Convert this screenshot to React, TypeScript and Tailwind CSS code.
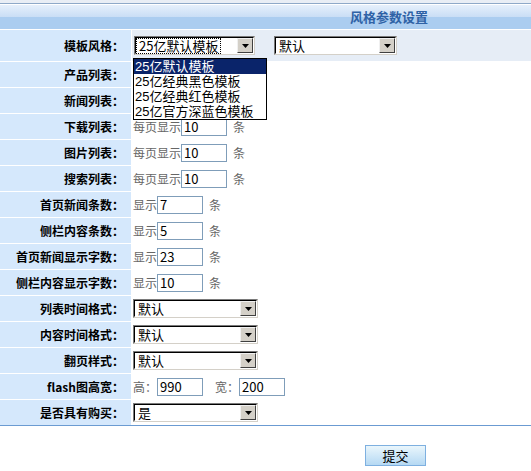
import React from "react"

const font = { fontFamily: '"Noto Sans CJK SC", "Liberation Sans", sans-serif' }

function Select({ value, width, focus }: { value: string; width: string; focus?: boolean }) {
  return (
    <div
      className={`flex h-[19px] ${width} border border-t-[#7a7a7a] border-l-[#7a7a7a] border-r-[#d4d0c8] border-b-[#d4d0c8] bg-white`}
    >
      <div className="flex flex-1 border border-t-black border-l-black border-r-white border-b-white min-w-0">
        <div className="flex-1 min-w-0 flex items-center px-px">
          <span
            className={`text-[13px] leading-[14px] text-black px-[2px] ${focus ? "outline-1 outline-dotted outline-black" : ""}`}
          >
            {value}
          </span>
        </div>
        <div className="w-[16px] flex items-center justify-center bg-[#d4d0c8] border border-t-[#f0f0f0] border-l-[#f0f0f0] border-r-[#404040] border-b-[#404040]">
          <svg width="7" height="4" viewBox="0 0 7 4">
            <path d="M0 0h7L3.5 4z" fill="#000" />
          </svg>
        </div>
      </div>
    </div>
  )
}

function Input({ value }: { value: string }) {
  return (
    <div className="flex items-center h-[18px] w-[46px] border border-[#7f9db9] bg-white px-[2px] text-[13px] text-black">
      {value}
    </div>
  )
}

function Row({ label, children, first }: { label: string; children?: React.ReactNode; first?: boolean }) {
  return (
    <div className={`flex border-t border-white ${first ? "h-[32px] bg-[#e6edf6]" : "h-[26px] bg-white"}`}>
      <div className="w-[132px] shrink-0 bg-[#d5e8fc] border-r border-white flex items-center justify-end pr-[7px] text-[12px] font-bold text-black">
        {label}：
      </div>
      <div className="flex-1 flex items-center gap-[6px] pl-[1px] text-[12px] text-[#666]">{children}</div>
    </div>
  )
}

const Count = ({ pre, value }: { pre: string; value: string }) => (
  <>
    <span className="flex items-center">
      <span>{pre}</span>
      <Input value={value} />
    </span>
    <span>条</span>
  </>
)

export default function App() {
  const options = ["25亿默认模板", "25亿经典黑色模板", "25亿经典红色模板", "25亿官方深蓝色模板"]
  return (
    <div className="w-[531px] h-[471px] bg-white" style={font}>
      {/* Header */}
      <div className="h-[3px] bg-[#e9eef5]" />
      <div className="h-px bg-[#8fa9c8]" />
      <div className="h-px bg-white" />
      <div className="relative h-[24px]">
        <div className="h-[12px] bg-gradient-to-b from-[#e6f0fb] to-[#c9def5]" />
        <div className="h-[12px] bg-[#abcdf0]" />
        <div className="absolute inset-0 flex items-center pl-[350px] text-[13px] font-bold text-[#2f62a6]">
          风格参数设置
        </div>
      </div>

      {/* Rows */}
      <Row label="模板风格" first>
        <div className="relative ml-[1px]">
          <Select value="25亿默认模板" width="w-[121px]" focus />
          <div className="absolute left-[-1px] top-[22px] z-10 w-[134px] border border-black bg-white font-['Liberation_Sans','Noto_Sans_CJK_SC',sans-serif]">
            {options.map((o, i) => (
              <div
                key={o}
                className={`h-[15px] flex items-center text-[13px] leading-[15px] pl-px ${i === 0 ? "bg-[#0a246a] text-white" : "text-black"}`}
              >
                {o}
              </div>
            ))}
          </div>
        </div>
        <div className="ml-[13px]">
          <Select value="默认" width="w-[123px]" />
        </div>
      </Row>
      <Row label="产品列表" />
      <Row label="新闻列表" />
      <Row label="下载列表">
        <Count pre="每页显示" value="10" />
      </Row>
      <Row label="图片列表">
        <Count pre="每页显示" value="10" />
      </Row>
      <Row label="搜索列表">
        <Count pre="每页显示" value="10" />
      </Row>
      <Row label="首页新闻条数">
        <Count pre="显示" value="7" />
      </Row>
      <Row label="侧栏内容条数">
        <Count pre="显示" value="5" />
      </Row>
      <Row label="首页新闻显示字数">
        <Count pre="显示" value="23" />
      </Row>
      <Row label="侧栏内容显示字数">
        <Count pre="显示" value="10" />
      </Row>
      <Row label="列表时间格式">
        <Select value="默认" width="w-[125px]" />
      </Row>
      <Row label="内容时间格式">
        <Select value="默认" width="w-[125px]" />
      </Row>
      <Row label="翻页样式">
        <Select value="默认" width="w-[125px]" />
      </Row>
      <Row label="flash图高宽">
        <span className="flex items-center">
          <span>高：</span>
          <Input value="990" />
        </span>
        <span className="flex items-center ml-[6px]">
          <span>宽：</span>
          <Input value="200" />
        </span>
      </Row>
      <Row label="是否具有购买">
        <Select value="是" width="w-[125px]" />
      </Row>
      <div className="h-px bg-[#6b9bd2]" />

      {/* Submit */}
      <div className="pt-[16px] pl-[365px]">
        <button className="w-[61px] h-[21px] border border-[#7eb0e0] bg-gradient-to-b from-[#eaf6fc] to-[#b5d9f3] text-[13px] text-black leading-none">
          提交
        </button>
      </div>
    </div>
  )
}
